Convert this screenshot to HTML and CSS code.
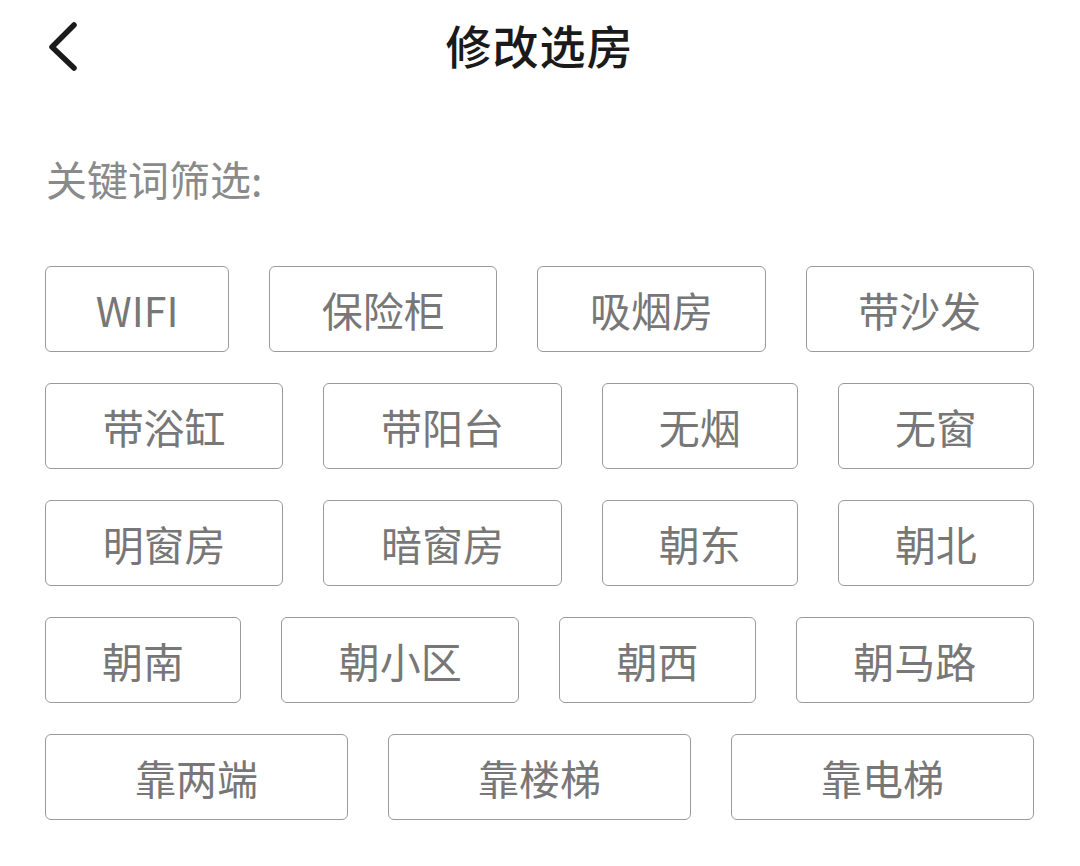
FILE: index.html
```html
<!DOCTYPE html>
<html lang="zh-CN">
<head>
    <meta charset="UTF-8">
    <meta name="viewport" content="width=device-width, initial-scale=1.0">
    <title>修改选房</title>
    <link rel="stylesheet" href="styles.css">
</head>
<body>
    <div class="page">
        <header class="topbar">
            <a class="back" href="#">
                <svg width="40" height="52" viewBox="0 0 40 52">
                    <polyline points="27,5 5,27 27,48" fill="none" stroke="#1a1a1a" stroke-width="5.5" stroke-linecap="round" stroke-linejoin="round"/>
                </svg>
            </a>
            <h1>修改选房</h1>
        </header>

        <div class="label">关键词筛选:</div>

        <div class="chips">
            <div class="row row-a">
                <button class="chip">WIFI</button>
                <button class="chip">保险柜</button>
                <button class="chip">吸烟房</button>
                <button class="chip">带沙发</button>
            </div>
            <div class="row row-b">
                <button class="chip">带浴缸</button>
                <button class="chip">带阳台</button>
                <button class="chip">无烟</button>
                <button class="chip">无窗</button>
            </div>
            <div class="row row-b">
                <button class="chip">明窗房</button>
                <button class="chip">暗窗房</button>
                <button class="chip">朝东</button>
                <button class="chip">朝北</button>
            </div>
            <div class="row row-c">
                <button class="chip">朝南</button>
                <button class="chip">朝小区</button>
                <button class="chip">朝西</button>
                <button class="chip">朝马路</button>
            </div>
            <div class="row row-d">
                <button class="chip">靠两端</button>
                <button class="chip">靠楼梯</button>
                <button class="chip">靠电梯</button>
            </div>
        </div>
    </div>
</body>
</html>
```

FILE: styles.css
```css
body {
    margin: 0;
    background-color: #ffffff;
    font-family: "Noto Sans CJK SC", "Noto Sans", sans-serif;
}
.page {
    width: 1080px;
    height: 866px;
    box-sizing: border-box;
    padding: 0 46px 0 45px;
}
.topbar {
    position: relative;
    height: 94px;
    display: flex;
    align-items: center;
    justify-content: center;
}
.back {
    position: absolute;
    left: 2px;
    top: 20px;
    display: block;
    width: 40px;
    height: 52px;
}
.topbar h1 {
    margin: 0 0 6px;
    font-size: 46px;
    font-weight: 500;
    color: #1a1a1a;
    letter-spacing: 1px;
}
.label {
    margin-top: 58px;
    font-size: 41px;
    line-height: 52px;
    color: #8a8a8a;
    margin-left: 1px;
}
.chips {
    margin-top: 62px;
    display: flex;
    flex-direction: column;
    gap: 31px;
}
.row {
    display: grid;
    column-gap: 40px;
}
.row-a {
    grid-template-columns: 184fr 228fr 228fr 228fr;
}
.row-b {
    grid-template-columns: 238fr 238fr 196fr 196fr;
}
.row-c {
    grid-template-columns: 196fr 238fr 196fr 238fr;
}
.row-d {
    grid-template-columns: 1fr 1fr 1fr;
}
.chip {
    height: 86px;
    padding: 0;
    background-color: #ffffff;
    border: 1px solid #9a9a9a;
    border-radius: 6px;
    color: #777777;
    font-family: "Noto Sans CJK SC", "Noto Sans", sans-serif;
    font-size: 41px;
    cursor: pointer;
}
```
